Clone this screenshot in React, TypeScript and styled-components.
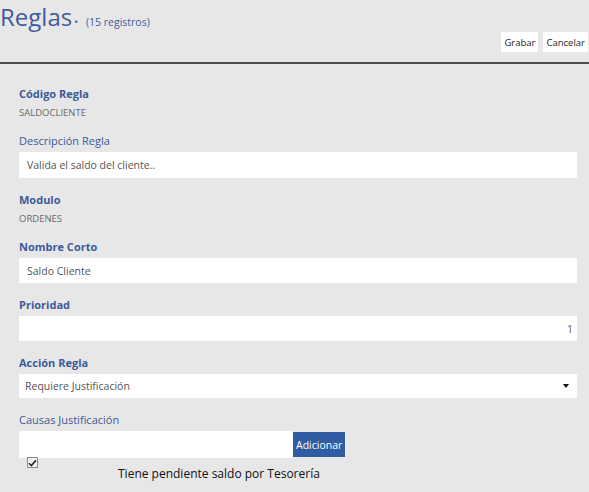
import styled, { createGlobalStyle } from "styled-components";

const GlobalStyle = createGlobalStyle`
    body {
        margin: 0;
        background: #e7e7e7;
        font-family: "Open Sans", "Liberation Sans", sans-serif;
    }
`;

const App = () => {
    return (
        <>
            <GlobalStyle />
            <Page>
                <Header>
                    <TitleRow>
                        <Title>Reglas</Title>
                        <Dot>•</Dot>
                        <Count>(15 registros)</Count>
                    </TitleRow>
                    <Actions>
                        <ActionButton>Grabar</ActionButton>
                        <ActionButton>Cancelar</ActionButton>
                    </Actions>
                </Header>
                <Form>
                    <Field>
                        <Label $bold>Código Regla</Label>
                        <Value>SALDOCLIENTE</Value>
                    </Field>
                    <Field $input>
                        <Label>Descripción Regla</Label>
                        <TextBox $h={26}>Valida el saldo del cliente..</TextBox>
                    </Field>
                    <Field>
                        <Label $bold>Modulo</Label>
                        <Value>ORDENES</Value>
                    </Field>
                    <Field $input>
                        <Label $bold>Nombre Corto</Label>
                        <TextBox $h={25}>Saldo Cliente</TextBox>
                    </Field>
                    <Field $input>
                        <Label $bold>Prioridad</Label>
                        <TextBox $h={25} $right>
                            1
                        </TextBox>
                    </Field>
                    <Field $input>
                        <Label $bold>Acción Regla</Label>
                        <SelectBox $h={24}>
                            <span>Requiere Justificación</span>
                            <Caret />
                        </SelectBox>
                    </Field>
                    <Field>
                        <Label>Causas Justificación</Label>
                        <AddRow>
                            <AddInput />
                            <AddButton>Adicionar</AddButton>
                        </AddRow>
                        <CheckRow>
                            <CheckBox>
                                <svg width="9" height="8" viewBox="0 0 9 8">
                                    <path
                                        d="M1 4.2 L3.4 6.6 L8 1.2"
                                        fill="none"
                                        stroke="#222"
                                        strokeWidth="1.6"
                                    />
                                </svg>
                            </CheckBox>
                            <CheckText>
                                Tiene pendiente saldo por Tesorería
                            </CheckText>
                        </CheckRow>
                    </Field>
                </Form>
            </Page>
        </>
    );
};
export default App;

const Page = styled.div`
    width: 589px;
    min-height: 492px;
    background: #e7e7e7;
`;

const Header = styled.div`
    display: flex;
    flex-direction: column;
    border-bottom: 2px solid #4d4d4d;
    height: 64px;
    box-sizing: border-box;
    margin-bottom: 22px;
`;

const TitleRow = styled.div`
    display: flex;
    align-items: baseline;
    height: 32px;
`;

const Title = styled.span`
    font-size: 24px;
    color: #3f5c9d;
    line-height: 33px;
`;

const Dot = styled.span`
    font-size: 10px;
    color: #3f5c9d;
    margin: 0 8px 0 2px;
`;

const Count = styled.span`
    font-size: 10.5px;
    color: #3f5c9d;
`;

const Actions = styled.div`
    display: flex;
    justify-content: flex-end;
    gap: 5px;
    padding-right: 1px;
`;

const ActionButton = styled.button`
    background: #fff;
    border: none;
    height: 20px;
    padding: 0 3px;
    font-family: "Open Sans", sans-serif;
    font-size: 9.5px;
    color: #222;
`;

const Form = styled.div`
    display: flex;
    flex-direction: column;
    padding: 0 12px 0 19px;
`;

const Field = styled.div<{ $input?: boolean }>`
    display: flex;
    flex-direction: column;
    margin-bottom: ${({ $input }) => ($input ? "14px" : "12px")};
`;

const Label = styled.div<{ $bold?: boolean }>`
    font-size: 11px;
    line-height: 16px;
    color: #3b5a9a;
    font-weight: ${({ $bold }) => ($bold ? 700 : 400)};
    margin-bottom: 3px;
`;

const Value = styled.div`
    font-size: 9.5px;
    line-height: 16px;
    color: #6a6a6a;
    text-transform: uppercase;
`;

const TextBox = styled.div<{ $right?: boolean; $h: number }>`
    background: #fff;
    height: ${({ $h }) => $h}px;
    display: flex;
    align-items: center;
    justify-content: ${({ $right }) => ($right ? "flex-end" : "flex-start")};
    padding: 0 4px 0 8px;
    font-size: 10.5px;
    color: #555;
`;

const SelectBox = styled(TextBox)`
    justify-content: space-between;
    padding: 0 8px 0 6px;
`;

const Caret = styled.span`
    width: 0;
    height: 0;
    border-left: 3px solid transparent;
    border-right: 3px solid transparent;
    border-top: 4px solid #111;
`;

const AddRow = styled.div`
    display: flex;
    align-items: center;
`;

const AddInput = styled.div`
    background: #fff;
    width: 274px;
    height: 27px;
`;

const AddButton = styled.button`
    background: #2f5ca3;
    color: #fff;
    border: none;
    height: 25px;
    padding: 0 3px;
    margin-left: 0;
    font-family: "Open Sans", sans-serif;
    font-size: 10.5px;
`;

const CheckRow = styled.div`
    display: flex;
    align-items: flex-start;
    margin-top: -1px;
`;

const CheckBox = styled.span`
    width: 11px;
    height: 11px;
    box-sizing: border-box;
    border: 1px solid #8a8a8a;
    background: #f4f4f4;
    margin: 0 0 0 8px;
    display: flex;
    align-items: center;
    justify-content: center;
`;

const CheckText = styled.span`
    font-size: 12px;
    color: #111;
    margin: 9px 0 0 80px;
    line-height: 16px;
`;
